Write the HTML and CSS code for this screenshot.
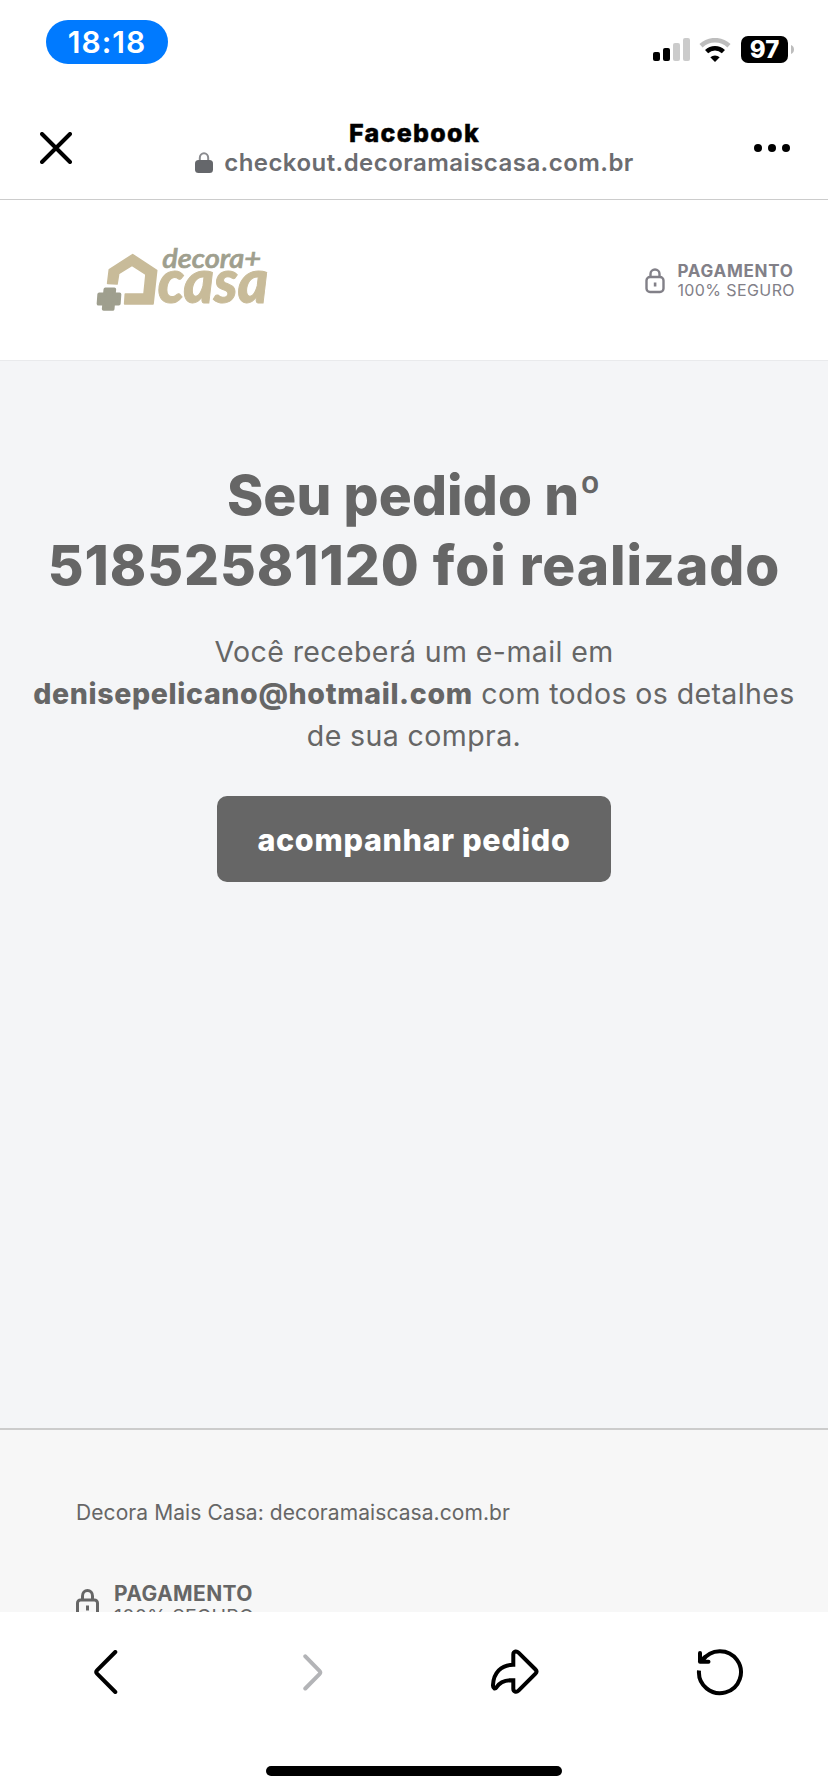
FILE: index.html
```html
<!DOCTYPE html>
<html lang="pt-BR">
<head>
  <meta charset="UTF-8" />
  <meta name="viewport" content="width=device-width, initial-scale=1.0" />
  <title>Decora Mais Casa - Pedido realizado</title>
  <link rel="stylesheet" href="styles.css">
</head>
<body>
  <!-- Phone status bar -->
  <div class="status-bar">
    <span class="clock">18:18</span>
    <div class="status-icons">
      <svg class="signal" width="37" height="23" viewBox="0 0 37 23">
        <rect x="0" y="14" width="7" height="9" rx="2" fill="#000"/>
        <rect x="10" y="10" width="7" height="13" rx="2" fill="#000"/>
        <rect x="20" y="5" width="7" height="18" rx="2" fill="#cbcbcb"/>
        <rect x="30" y="0" width="7" height="23" rx="2" fill="#cbcbcb"/>
      </svg>
      <svg class="wifi" width="32" height="24" viewBox="0 0 32 24">
        <path d="M2 7.7a20.5 20.5 0 0 1 28 0" fill="none" stroke="#bdbdbd" stroke-width="4.6"/>
        <path d="M7.6 13.6a12.3 12.3 0 0 1 16.8 0" fill="none" stroke="#000" stroke-width="4.6"/>
        <path d="M11.3 19.2a7 7 0 0 1 9.4 0L16 24z" fill="#000"/>
      </svg>
      <div class="battery"><span>97</span></div>
      <svg class="battery-tip" width="3" height="9" viewBox="0 0 3 9">
        <path d="M0 0c4 1.5 4 7.5 0 9z" fill="#bdbdbd"/>
      </svg>
    </div>
  </div>

  <!-- In-app browser bar -->
  <div class="browser-bar">
    <svg class="close" width="32" height="32" viewBox="0 0 32 32">
      <path d="M2 2l28 28M30 2L2 30" fill="none" stroke="#000" stroke-width="4" stroke-linecap="round"/>
    </svg>
    <div class="page-info">
      <div class="page-title">Facebook</div>
      <div class="page-url">
        <svg width="18" height="21" viewBox="0 0 18 21">
          <path d="M4.8 10V6a4.2 4.8 0 0 1 8.4 0v4" fill="none" stroke="#8b8c90" stroke-width="2"/>
          <rect x="0" y="8" width="18" height="13" rx="3.5" fill="#65676b"/>
        </svg>
        <span>checkout.decoramaiscasa.com.br</span>
      </div>
    </div>
    <svg class="more" width="36" height="8" viewBox="0 0 36 8">
      <circle cx="4" cy="4" r="4"/>
      <circle cx="18" cy="4" r="4"/>
      <circle cx="32" cy="4" r="4"/>
    </svg>
  </div>

  <!-- Store header -->
  <header>
    <svg class="logo" width="210" height="100" viewBox="0 0 630 300">
      <path d="M83 160L88 119L158 74L230 121L219 222L134 222L136 192L192 192L198 133L156 106L116 131L111 162Z" fill="#c8bb99" stroke="#c8bb99" stroke-width="5" stroke-linejoin="round"/>
      <path d="M76 178h27l-1.5 15h17l-2 28h-17l-1.5 16h-27l1.5 -16h-17l2 -28h17z" fill="#9f9f8e" stroke="#9f9f8e" stroke-width="11" stroke-linejoin="round"/>
      <text class="logo-small" x="247" y="115" textLength="296" lengthAdjust="spacingAndGlyphs">decora+</text>
      <text class="logo-big" x="233" y="218" textLength="332" lengthAdjust="spacingAndGlyphs">casa</text>
    </svg>
    <div class="secure">
      <svg width="20" height="26" viewBox="0 0 20 26">
        <rect x="1.5" y="9" width="17" height="15" rx="3.5" fill="none" stroke="#828088" stroke-width="2.4"/>
        <path d="M5.5 9V6a4.5 4.5 0 0 1 9 0v3" fill="none" stroke="#828088" stroke-width="2.4"/>
        <rect x="8.8" y="14.5" width="2.6" height="4" fill="#828088"/>
      </svg>
      <div>
        <strong>PAGAMENTO</strong>
        <span>100% SEGURO</span>
      </div>
    </div>
  </header>

  <!-- Order confirmation -->
  <main>
    <h1><span class="line-one">Seu pedido n<span class="ordinal">º</span></span><br><span class="line-two">51852581120 foi realizado</span></h1>
    <p>Você receberá um e-mail em<br><strong>denisepelicano@hotmail.com</strong> com todos os detalhes<br>de sua compra.</p>
    <button type="button">acompanhar pedido</button>
  </main>

  <!-- Footer -->
  <footer>
    <p>Decora Mais Casa: decoramaiscasa.com.br</p>
    <div class="secure secure-footer">
      <svg width="23" height="30" viewBox="0 0 23 30">
        <rect x="1.5" y="11" width="20" height="17" rx="3" fill="none" stroke="#666" stroke-width="3"/>
        <path d="M6.5 11V7a5 5.5 0 0 1 10 0v4" fill="none" stroke="#666" stroke-width="3"/>
        <rect x="10" y="16.5" width="3" height="5" fill="#666"/>
      </svg>
      <div>
        <strong>PAGAMENTO</strong>
        <span>100% SEGURO</span>
      </div>
    </div>
  </footer>

  <!-- Browser toolbar -->
  <nav class="toolbar">
    <div class="tools">
      <svg class="back" width="24" height="44" viewBox="0 0 24 44">
        <path d="M21.3 2L3 20.3q-1.7 1.7 0 3.4L21.3 42" fill="none" stroke="#000" stroke-width="4" stroke-linecap="round"/>
      </svg>
      <svg class="forward" width="20" height="37" viewBox="0 0 20 37">
        <path d="M2.3 2.3L16.5 16.8q1.7 1.7 0 3.4L2.3 34.5" fill="none" stroke="#b3b4b7" stroke-width="4" stroke-linecap="round"/>
      </svg>
      <svg class="share" width="48" height="46" viewBox="0 0 48 46">
        <path d="M22.3 15.7V5.5Q22.3 3 24.5 2.5Q26 2.2 27.5 3.7L44.5 20.5Q46.5 22.6 44.5 24.7L27.5 41.7Q26 43.2 24.2 42.7Q22.3 42 22.3 39.8V31.2C14 30.8 9 32.500 5.5 38.3Q4.5 39.8 3 39.3Q1.9 38.8 2 36C2.5 24 10 15.8 22.3 15.7Z" fill="none" stroke="#000" stroke-width="4"/>
      </svg>
      <svg class="reload" width="48" height="48" viewBox="0 0 48 48">
        <path d="M3 22.5A21 21 0 1 0 6.5 12.5" fill="none" stroke="#000" stroke-width="4"/>
        <path d="M4 5V13.7H12.500M4 13.700L9 9" fill="none" stroke="#000" stroke-width="4" stroke-linecap="round" stroke-linejoin="round"/>
      </svg>
    </div>
    <div class="home-indicator"></div>
  </nav>
</body>
</html>
```

FILE: styles.css
```css
/* Base styling */
* {
  box-sizing: border-box;
}
body {
  margin: 0;
  height: 1792px;
  display: flex;
  flex-direction: column;
  overflow: hidden;
  background-color: #fff;
  color: #666;
  font-family: Inter, 'Liberation Sans', sans-serif;
}
svg {
  display: block;
  flex: none;
}
/* Status bar */
.status-bar {
  height: 84px;
  display: flex;
  justify-content: space-between;
  align-items: flex-start;
  padding: 20px 34px 0 46px;
}
.clock {
  width: 122px;
  height: 44px;
  border-radius: 22px;
  background-color: #007aff;
  color: #fff;
  font-size: 30px;
  font-weight: 600;
  letter-spacing: 1px;
  line-height: 44px;
  text-align: center;
}
.status-icons {
  display: flex;
  align-items: center;
  padding-top: 16px;
}
.wifi {
  margin: 1px 10px 0 9px;
}
.battery {
  width: 47px;
  height: 27px;
  border-radius: 7px;
  background-color: #000;
  color: #fff;
  font-size: 24px;
  font-weight: 800;
  line-height: 27px;
  text-align: center;
}
.battery-tip {
  margin-left: 3px;
}
/* In-app browser bar */
.browser-bar {
  height: 116px;
  display: flex;
  justify-content: space-between;
  padding: 48px 38px 0 40px;
  border-bottom: 1px solid #ccc;
}
.page-info {
  margin: -14px 0 0 3px;
  text-align: center;
}
.page-title {
  color: #000;
  font-size: 25px;
  font-weight: 800;
  letter-spacing: 1.3px;
  line-height: 30px;
  -webkit-text-stroke: 0.4px #000;
}
.page-url {
  display: flex;
  gap: 11px;
  color: #6b6c70;
  font-size: 24px;
  font-weight: 600;
  letter-spacing: 0.45px;
  line-height: 30px;
}
.page-url svg {
  margin-top: 4px;
}
.more {
  margin-top: 12px;
}
/* Store header */
header {
  height: 161px;
  display: flex;
  justify-content: space-between;
  padding: 30px 33px 0 80px;
  border-bottom: 1px solid #e9eaec;
}
.logo-small,
.logo-big {
  font-family: Lato, sans-serif;
  font-style: italic;
}
.logo-small {
  font-size: 78px;
  font-weight: 600;
  fill: #9f9f8e;
  stroke: #9f9f8e;
  stroke-width: 2px;
}
.logo-big {
  font-size: 182px;
  font-weight: 900;
  fill: #c8bb99;
  stroke: #c8bb99;
  stroke-width: 3px;
}
/* Secure payment badge */
.secure {
  display: flex;
  gap: 12px;
  padding-top: 31px;
  color: #828088;
}
.secure svg {
  margin-top: 7px;
}
.secure strong,
.secure span {
  display: block;
}
.secure strong {
  font-size: 17px;
  font-weight: 700;
  letter-spacing: 0.75px;
  line-height: 20px;
}
.secure span {
  font-size: 16px;
  letter-spacing: 0.4px;
  line-height: 19px;
}
/* Order confirmation */
main {
  height: 1067px;
  padding-top: 99px;
  background-color: #f4f5f7;
  text-align: center;
}
main h1 {
  margin: 0 0 31px;
  font-size: 55px;
  font-weight: 800;
  line-height: 70px;
}
.line-one {
  letter-spacing: 0.1px;
}
.ordinal {
  font-size: 44px;
  line-height: 0;
  vertical-align: 7px;
}
.line-two {
  letter-spacing: 0.95px;
}
main p {
  margin: 0 0 39px;
  font-size: 28.5px;
  letter-spacing: 0.4px;
  line-height: 42px;
  white-space: nowrap;
}
main p strong {
  font-weight: 800;
  letter-spacing: 0.65px;
}
main button {
  width: 394px;
  height: 86px;
  border: none;
  border-radius: 10px;
  padding: 0;
  background-color: #666;
  color: #fff;
  font-family: inherit;
  font-size: 30.5px;
  font-weight: 800;
  letter-spacing: 0.7px;
  cursor: pointer;
}
/* Footer */
footer {
  height: 184px;
  overflow: hidden;
  padding: 68px 75px 0 76px;
  border-top: 2px solid #ccc;
  background-color: #f7f7f7;
}
footer p {
  margin: 0;
  font-size: 21px;
  letter-spacing: 0.08px;
  line-height: 30px;
}
.secure-footer {
  gap: 15px;
  padding-top: 54px;
  color: #666;
}
.secure-footer strong {
  font-size: 21px;
  letter-spacing: 0.4px;
  line-height: 24px;
}
.secure-footer span {
  font-size: 19.5px;
  letter-spacing: 0.2px;
  line-height: 23px;
}
/* Browser toolbar */
.toolbar {
  height: 180px;
  background-color: #fff;
}
.tools {
  height: 120px;
  display: grid;
  grid-template-columns: repeat(4, 1fr);
  justify-items: center;
  align-items: center;
  padding: 0 6px 0 4px;
}
.forward {
  margin-left: 5px;
}
.home-indicator {
  width: 296px;
  height: 10px;
  margin: 34px auto 0;
  border-radius: 5px;
  background-color: #000;
}
```
